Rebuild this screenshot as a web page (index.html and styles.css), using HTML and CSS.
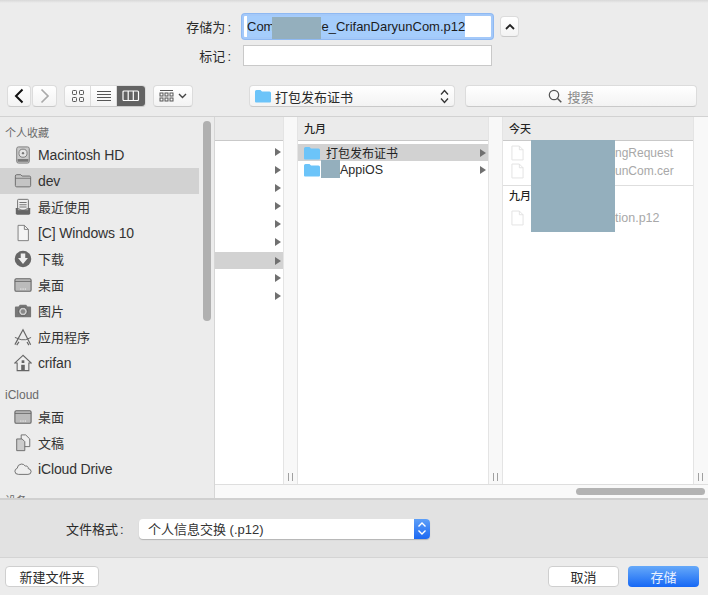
FILE: index.html
```html
<!DOCTYPE html>
<html lang="zh-CN">
<head>
<meta charset="utf-8">
<title>存储为</title>
<link rel="stylesheet" href="styles.css">
</head>
<body>
<div class="dialog">
  <form class="name-form">
    <span class="form-label">存储为<span class="colon">:</span></span>
    <div class="name-row">
      <div class="name-input"><span class="selected">Com<span class="redact-inline"></span>e_CrifanDaryunCom.p12</span></div>
      <button type="button" class="btn collapse"><svg width="12" height="8" viewBox="0 0 12 8"><path d="M2 6l4-4 4 4" fill="none" stroke="#222" stroke-width="1.800"/></svg></button>
    </div>
    <span class="form-label">标记<span class="colon">:</span></span>
    <div class="tag-row"><div class="tag-input"></div></div>
  </form>

  <div class="toolbar">
    <div class="nav-group">
      <button type="button" class="btn nav"><svg width="12" height="16" viewBox="0 0 12 16"><path d="M9.500 1.500L3 8l6.500 6.500" fill="none" stroke="#111" stroke-width="2"/></svg></button>
      <button type="button" class="btn nav"><svg width="12" height="16" viewBox="0 0 12 16"><path d="M2.500 1.500L9 8l-6.500 6.500" fill="none" stroke="#aaa" stroke-width="1.700"/></svg></button>
    </div>
    <div class="segmented">
      <span class="seg"><svg width="14" height="14" viewBox="0 0 14 14" fill="none" stroke="#555"><rect x="1.500" y="1.500" width="4" height="4" rx=".8"/><rect x="8.500" y="1.500" width="4" height="4" rx=".8"/><rect x="1.500" y="8.500" width="4" height="4" rx=".8"/><rect x="8.500" y="8.500" width="4" height="4" rx=".8"/></svg></span>
      <span class="seg"><svg width="16" height="13" viewBox="0 0 16 13" stroke="#555"><path d="M1 1.500h14M1 4.500h14M1 7.500h14M1 10.500h14"/></svg></span>
      <span class="seg seg-on"><svg width="18" height="12" viewBox="0 0 18 12" fill="none" stroke="#fff" stroke-width="1.200"><rect x="1" y="1" width="15.500" height="9.500" rx="1"/><path d="M6.200 1v9.500M11.300 1v9.500"/></svg></span>
    </div>
    <button type="button" class="btn group-btn"><svg width="15" height="14" viewBox="0 0 15 14" fill="none" stroke="#555"><path d="M1 1.500h13"/><rect x="1" y="4" width="3" height="3"/><rect x="6" y="4" width="3" height="3"/><rect x="11" y="4" width="3" height="3"/><rect x="1" y="9" width="3" height="3"/><rect x="6" y="9" width="3" height="3"/><rect x="11" y="9" width="3" height="3"/></svg><svg width="9" height="6" viewBox="0 0 9 6"><path d="M1 1l3.500 3.500L8 1" fill="none" stroke="#444" stroke-width="1.400"/></svg></button>
    <button type="button" class="btn path-btn">
      <svg class="folder-sm" width="16" height="14" viewBox="0 0 16 14"><path d="M0 2.500Q0 1 1.500 1h4L7 2.500h7.500Q16 2.500 16 4v8.500q0 1-1 1H1q-1 0-1-1z" fill="#6cc4f9"/></svg>
      <span class="path-text">打包发布证书</span>
      <svg width="9" height="15" viewBox="0 0 9 15"><path d="M1 5.500l3.500-4 3.500 4M1 9.500l3.500 4 3.500-4" fill="none" stroke="#333" stroke-width="1.300"/></svg>
    </button>
    <button type="button" class="btn search-btn"><svg width="14" height="14" viewBox="0 0 14 14" fill="none" stroke="#555" stroke-width="1.200"><circle cx="6" cy="6" r="4.700"/><path d="M9.500 9.500l3.800 3.800" stroke-width="1.500"/></svg><span>搜索</span></button>
  </div>

  <div class="browser">
    <aside class="sidebar">
      <h3 class="side-head">个人收藏</h3>
      <div class="side-item"><svg class="side-icon" viewBox="0 0 20 20"><rect x="3" y="1" width="14" height="18" rx="2" fill="#c9c9c9" stroke="#777"/><circle cx="10" cy="8" r="4.500" fill="#e4e4e4" stroke="#777"/><circle cx="10" cy="8" r="1.300" fill="#777"/><path d="M4 14.500h12v3H4z" fill="#777"/></svg><span class="lat">Macintosh HD</span></div>
      <div class="side-item side-on"><svg class="side-icon" viewBox="0 0 20 20"><path d="M1.500 4.500Q1.500 3 3 3h4.500L9 4.500h8q1.500 0 1.500 1.500v9q0 1.500-1.500 1.500H3q-1.500 0-1.500-1.500z" fill="#c4c4c4" stroke="#666"/><path d="M1.500 7h17" stroke="#666" stroke-width=".8"/></svg><span class="lat">dev</span></div>
      <div class="side-item"><svg class="side-icon" viewBox="0 0 20 20"><path d="M2 11h16v6q0 1.500-1.500 1.500h-13Q2 18.500 2 17z" fill="#666"/><rect x="4" y="1.500" width="12" height="12" rx="1" fill="#eee" stroke="#666"/><path d="M6 5h8M6 7.500h8M6 10h8" stroke="#666"/><path d="M2 12h4q.5 2 4 2t4-2h4" fill="none" stroke="#666"/></svg><span class="cjk">最近使用</span></div>
      <div class="side-item"><svg class="side-icon" viewBox="0 0 20 20"><path d="M4.500 1.500h7l4.500 4.500v12.500h-11.500z" fill="#f4f4f4" stroke="#777"/><path d="M11.500 1.500V6H16" fill="none" stroke="#777"/></svg><span class="lat">[C] Windows 10</span></div>
      <div class="side-item"><svg class="side-icon" viewBox="0 0 20 20"><circle cx="10" cy="10" r="9.200" fill="#666"/><path d="M7.500 4h5v5h3L10 15.500 4.500 9h3z" fill="#eee"/></svg><span class="cjk">下载</span></div>
      <div class="side-item"><svg class="side-icon" viewBox="0 0 20 20"><rect x="1" y="3" width="18" height="14" rx="1.500" fill="#bbb" stroke="#666" stroke-width="1.200"/><path d="M1 6h18" stroke="#666"/><path d="M7 14.500h1.200M9.500 14.500h1.200M12 14.500h1.200" stroke="#fff"/></svg><span class="cjk">桌面</span></div>
      <div class="side-item"><svg class="side-icon" viewBox="0 0 20 20"><path d="M1 6q0-1 1-1h3l1.500-2h7L15 5h3q1 0 1 1v10q0 1-1 1H2q-1 0-1-1z" fill="#777"/><circle cx="10" cy="10.500" r="4.800" fill="#ccc" stroke="#555"/><circle cx="10" cy="10.500" r="2.500" fill="#888"/></svg><span class="cjk">图片</span></div>
      <div class="side-item"><svg class="side-icon" viewBox="0 0 20 20" fill="none" stroke="#666" stroke-width="1.300"><path d="M1 18.500L10 2l8.500 16.500"/><path d="M1 10.500l7 2.500h5l6-2.500" stroke-width="1.100"/><path d="M5.500 15.500L3 19M14.500 15.500l2 3.500"/></svg><span class="cjk">应用程序</span></div>
      <div class="side-item"><svg class="side-icon" viewBox="0 0 20 20"><path d="M10 1.500L.8 10h2.700v8.500h13V10h2.700z" fill="#eee" stroke="#666" stroke-width="1.200"/><rect x="8" y="12" width="4" height="6.500" fill="#666"/><rect x="8.500" y="7" width="3" height="3" fill="#666"/></svg><span class="lat">crifan</span></div>
      <h3 class="side-head side-gap side-head-lat">iCloud</h3>
      <div class="side-item"><svg class="side-icon" viewBox="0 0 20 20"><rect x="1" y="3" width="18" height="14" rx="1.500" fill="#bbb" stroke="#666" stroke-width="1.200"/><path d="M1 6h18" stroke="#666"/><path d="M7 14.500h1.200M9.500 14.500h1.200M12 14.500h1.200" stroke="#fff"/></svg><span class="cjk">桌面</span></div>
      <div class="side-item"><svg class="side-icon" viewBox="0 0 20 20"><path d="M8 1h5l4.500 4.500V14H8z" fill="#eee" stroke="#666"/><path d="M3 5.500h6l3 3V18.500H3z" fill="#ccc" stroke="#666"/></svg><span class="cjk">文稿</span></div>
      <div class="side-item"><svg class="side-icon" viewBox="0 0 20 20"><path d="M5 16q-4 0-4-3.500Q1 10 3.500 9.300 4 5 8 4.500q3-.3 4.500 2.300 1-.5 2.200.2 1.300.8 1.100 2.500 3.200.7 3.200 3.300 0 3.200-3.500 3.200z" fill="#eee" stroke="#666"/></svg><span class="lat">iCloud Drive</span></div>
      <h3 class="side-head side-gap">设备</h3>
      <div class="side-scroll"></div>
    </aside>

    <div class="columns-area">
      <div class="columns">
        <section class="col col-a">
          <div class="col-head"></div>
          <div class="col-body">
            <div class="row-a"><span class="arrow"></span></div>
            <div class="row-a"><span class="arrow"></span></div>
            <div class="row-a"><span class="arrow"></span></div>
            <div class="row-a"><span class="arrow"></span></div>
            <div class="row-a"><span class="arrow"></span></div>
            <div class="row-a"><span class="arrow"></span></div>
            <div class="row-a row-on"><span class="arrow"></span></div>
            <div class="row-a"><span class="arrow"></span></div>
            <div class="row-a"><span class="arrow"></span></div>
          </div>
        </section>
        <div class="resizer"><span class="grip"></span></div>
        <section class="col col-b">
          <div class="col-head"><span>九月</span></div>
          <div class="col-body">
            <div class="row-b row-on">
              <svg class="folder-sm" width="16" height="14" viewBox="0 0 16 14"><path d="M0 2.500Q0 1 1.500 1h4L7 2.500h7.500Q16 2.500 16 4v8.500q0 1-1 1H1q-1 0-1-1z" fill="#6cc4f9"/></svg>
              <span class="row-text row-first">打包发布证书</span><span class="arrow"></span>
            </div>
            <div class="row-b">
              <svg class="folder-sm" width="16" height="14" viewBox="0 0 16 14"><path d="M0 2.500Q0 1 1.500 1h4L7 2.500h7.500Q16 2.500 16 4v8.500q0 1-1 1H1q-1 0-1-1z" fill="#6cc4f9"/></svg>
              <span class="redact-folder"></span><span class="row-text row-lat">AppiOS</span><span class="arrow"></span>
            </div>
          </div>
        </section>
        <div class="resizer"><span class="grip"></span></div>
        <section class="col col-c">
          <div class="col-head"><span>今天</span></div>
          <div class="col-body">
            <div class="file-group">
              <div class="row-c"><svg class="file-icon" viewBox="0 0 14 16"><path d="M1 .5h8l4 4v11H1z" fill="#fff" stroke="#e2e2e2"/><path d="M9 .5v4h4" fill="none" stroke="#e2e2e2"/></svg><span>ngRequest</span></div>
              <div class="row-c"><svg class="file-icon" viewBox="0 0 14 16"><path d="M1 .5h8l4 4v11H1z" fill="#fff" stroke="#e2e2e2"/><path d="M9 .5v4h4" fill="none" stroke="#e2e2e2"/></svg><span>unCom.cer</span></div>
            </div>
            <div class="month-head">九月</div>
            <div class="row-c"><svg class="file-icon" viewBox="0 0 14 16"><path d="M1 .5h8l4 4v11H1z" fill="#fff" stroke="#e2e2e2"/><path d="M9 .5v4h4" fill="none" stroke="#e2e2e2"/></svg><span class="name-long">tion.p12</span></div>
          </div>
          <div class="redact-block"></div>
        </section>
        <div class="resizer resizer-end"><span class="grip"></span></div>
      </div>
      <div class="h-scroll"><span class="h-thumb"></span></div>
    </div>
  </div>

  <div class="format-bar">
    <span class="format-label">文件格式<span class="colon">:</span></span>
    <div class="format-select">
      <span class="format-value">个人信息交换 (.p12)</span>
      <span class="format-stepper"><svg width="10" height="15" viewBox="0 0 10 15"><path d="M1.500 5.500L5 2l3.500 3.500M1.500 9.500L5 13l3.500-3.500" fill="none" stroke="#fff" stroke-width="1.400"/></svg></span>
    </div>
  </div>

  <div class="footer">
    <button type="button" class="btn foot-btn new-folder">新建文件夹</button>
    <div class="foot-actions">
      <button type="button" class="btn foot-btn action">取消</button>
      <button type="button" class="btn foot-btn action primary">存储</button>
    </div>
  </div>
</div>
</body>
</html>
```

FILE: styles.css
```css
* { box-sizing: border-box; }
html, body { margin: 0; padding: 0; }
body {
  width: 708px;
  height: 595px;
  overflow: hidden;
  font-family: "Liberation Sans", "Noto Sans CJK SC", sans-serif;
  color: #2a2a2a;
  background: #ececec;
}
.dialog {
  width: 708px;
  height: 595px;
  display: flex;
  flex-direction: column;
  background: linear-gradient(#d8d8d8, #ececec 3px);
}
.btn {
  display: flex;
  align-items: center;
  justify-content: center;
  margin: 0;
  padding: 0;
  font: inherit;
  color: inherit;
  background: linear-gradient(#ffffff, #f3f3f3);
  border: 1px solid #dcdcdc;
  border-bottom-color: #c9c9c9;
  border-radius: 4px;
}
.colon { margin-left: 2px; }

/* name form */
.name-form {
  display: grid;
  grid-template-columns: 231px 1fr;
  grid-template-rows: 25px 21px;
  row-gap: 6px;
  column-gap: 11px;
  margin-top: 14px;
  align-items: center;
  height: 52px;
}
.form-label { text-align: right; font-size: 13px; }
.name-row { display: flex; align-items: center; gap: 7px; }
.name-input {
  width: 251px;
  height: 25px;
  padding: 0 0 0 3px;
  display: flex;
  align-items: center;
  font-size: 13px;
  white-space: nowrap;
  background: #fff;
  border: 2px solid #a4c9f9;
  border-radius: 3px;
  box-shadow: 0 0 0 1px #8fb9f2;
}
.selected {
  display: inline-flex;
  align-items: center;
  height: 21px;
  background: #a5cdfc;
  color: #1c1c1c;
}
.redact-inline {
  position: relative;
  top: 1px;
  display: inline-block;
  width: 49px;
  height: 22px;
  margin-left: -2px;
  background: #94afbd;
}
.collapse { width: 19px; height: 21px; }
.tag-row { padding-left: 1px; }
.tag-input { width: 249px; height: 21px; background: #fff; border: 1px solid #c9c9c9; }

/* toolbar */
.toolbar {
  display: flex;
  align-items: center;
  height: 22px;
  margin: 19px 11px 9px 7px;
}
.nav-group { display: flex; gap: 1px; }
.nav { width: 24px; height: 22px; }
.nav + .nav { width: 25px; }
.segmented {
  display: flex;
  width: 82px;
  height: 22px;
  margin-left: 7px;
  overflow: hidden;
  background: linear-gradient(#ffffff, #f3f3f3);
  border: 1px solid #dcdcdc;
  border-bottom-color: #c9c9c9;
  border-radius: 4px;
}
.seg { flex: 1; display: flex; align-items: center; justify-content: center; border-right: 1px solid #dcdcdc; }
.seg-on { flex: 0 0 28px; background: #636363; border-right: 0; }
.group-btn { width: 40px; height: 22px; margin-left: 7px; gap: 4px; }
.path-btn {
  width: 206px;
  height: 22px;
  margin-left: 56px;
  padding: 0 5px 0 5px;
  justify-content: flex-start;
  font-size: 13px;
}
.path-text { flex: 1; text-align: left; margin-left: 4px; }
.search-btn {
  width: 232px;
  height: 22px;
  margin-left: 10px;
  padding-right: 20px;
  gap: 5px;
  font-size: 13px;
  color: #8a8a8a;
}
.folder-sm { flex: none; }

/* browser */
.browser {
  display: flex;
  height: 382px;
  border-top: 1px solid #d2d2d2;
  overflow: hidden;
}
.sidebar {
  position: relative;
  flex: 0 0 215px;
  height: 381px;
  padding-top: 5px;
  overflow: hidden;
  background: #ececec;
  border-right: 1px solid #d6d6d6;
}
.side-head {
  height: 20px;
  margin: 0;
  padding-left: 5px;
  line-height: 22px;
  font-size: 11px;
  font-weight: 400;
  color: #6a6a6a;
}
.side-head-lat { font-size: 12px; }
.side-gap { margin-top: 8px; }
.side-item {
  display: flex;
  align-items: center;
  width: 199px;
  height: 26px;
  padding-left: 14px;
  font-size: 13px;
  color: #333;
}
.lat { font-size: 14px; letter-spacing: -0.15px; }
.cjk { margin-top: -2px; }
.side-on { background: #d2d2d2; }
.side-icon { flex: none; width: 18px; height: 18px; margin-right: 6px; }
.side-scroll {
  position: absolute;
  top: 4px;
  left: 203px;
  width: 8px;
  height: 200px;
  border-radius: 4px;
  background: #b0b0b0;
}

/* columns */
.columns-area { flex: 1; display: flex; flex-direction: column; min-width: 0; }
.columns { display: flex; height: 368px; border-bottom: 1px solid #dedede; }
.col { position: relative; background: #fff; }
.col-a { flex: 0 0 68px; }
.col-b { flex: 0 0 190px; }
.col-c { flex: 0 0 190px; }
.col-head {
  display: flex;
  align-items: center;
  height: 24px;
  padding: 0 0 2px 6px;
  font-size: 11px;
  font-weight: 500;
  color: #222;
  background: #ebebeb;
  border-bottom: 1px solid #c9c9c9;
}
.col-body { padding-top: 2px; font-size: 12px; }
.resizer {
  position: relative;
  flex: 0 0 15px;
  background: #f8f8f8;
  border-left: 1px solid #e4e4e4;
  border-right: 1px solid #e4e4e4;
}
.resizer-end { border-right: 0; }
.grip {
  position: absolute;
  left: 4px;
  bottom: 3px;
  width: 5px;
  height: 8px;
  border-left: 1px solid #a0a0a0;
  border-right: 1px solid #a0a0a0;
}
.arrow {
  flex: none;
  width: 0;
  height: 0;
  border-left: 6px solid #707070;
  border-top: 4px solid transparent;
  border-bottom: 4px solid transparent;
}
.row-a {
  display: flex;
  align-items: center;
  justify-content: flex-end;
  height: 18px;
  padding-right: 2px;
}
.row-on { background: #d2d2d2; border-top: 1px solid #fff; }
.row-b {
  display: flex;
  align-items: center;
  height: 18px;
  padding: 0 2px 0 6px;
}
.row-text { flex: 1; }
.row-first { margin-left: 6px; color: #222; }
.row-lat { font-size: 12.5px; }
.redact-folder { flex: none; width: 19px; height: 18px; margin: -2px 0 0 1px; background: #94afbd; }
.file-group { height: 43px; padding-top: 1px; border-bottom: 1px solid #dedede; }
.row-c {
  display: flex;
  align-items: center;
  height: 18px;
  padding-left: 8px;
  color: #a8a8a8;
}
.name-long { font-size: 12.5px; }
.file-icon { flex: none; width: 13px; height: 16px; margin-right: 91px; }
.month-head { height: 23px; padding-left: 6px; line-height: 21px; font-size: 11px; font-weight: 500; color: #222; }
.redact-block {
  position: absolute;
  top: 23px;
  left: 28px;
  width: 84px;
  height: 92px;
  background: #94afbd;
}
.h-scroll {
  flex: 1;
  position: relative;
  background: #f9f9f9;
}
.h-thumb {
  position: absolute;
  top: 3px;
  right: 3px;
  width: 129px;
  height: 7px;
  border-radius: 4px;
  background: #b3b3b3;
}

/* format bar */
.format-bar {
  display: flex;
  align-items: center;
  height: 60px;
  padding-left: 66px;
  font-size: 13px;
  background: #e2e2e2;
  border-top: 2px solid #d0d0d0;
  border-bottom: 1px solid #d4d4d4;
}
.format-label { width: 73px; }
.format-select {
  display: flex;
  align-items: center;
  width: 291px;
  height: 20px;
  background: #fff;
  border-radius: 4px;
  box-shadow: 0 1px 1px #b4b4b4;
  overflow: hidden;
}
.format-value { flex: 1; padding-left: 9px; color: #333; }
.format-stepper {
  display: flex;
  align-items: center;
  justify-content: center;
  width: 16px;
  height: 20px;
  background: linear-gradient(#5d9ff8, #1c68f2);
}

/* footer */
.footer {
  flex: 1;
  display: flex;
  align-items: center;
  justify-content: space-between;
  padding: 0 9px 0 5px;
  font-size: 13px;
}
.foot-btn { height: 21px; font-size: 13px; background: #fff; border-color: #cfcfcf; }
.new-folder { width: 94px; }
.foot-actions { display: flex; gap: 9px; }
.action { width: 71px; }
.primary {
  color: #e8f1ff;
  border: 0;
  background: linear-gradient(#66a9f9, #1668f5);
}
```
